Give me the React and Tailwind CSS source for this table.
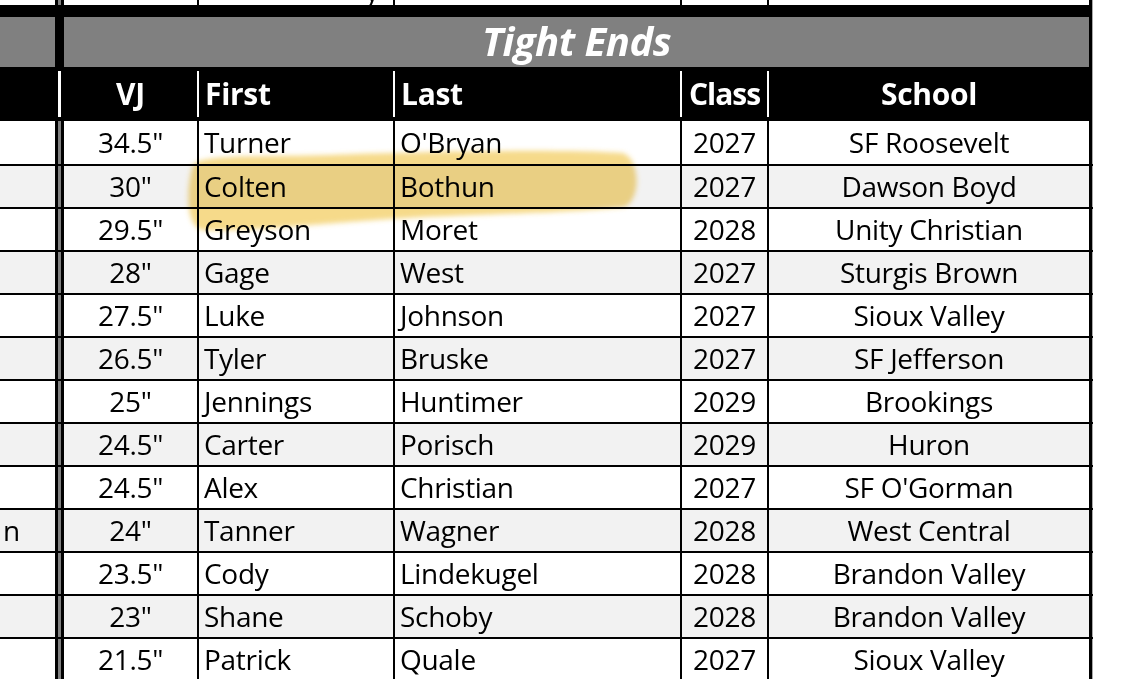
const rows = [
  ['', '34.5"', 'Turner', "O'Bryan", '2027', 'SF Roosevelt'],
  ['', '30"', 'Colten', 'Bothun', '2027', 'Dawson Boyd'],
  ['', '29.5"', 'Greyson', 'Moret', '2028', 'Unity Christian'],
  ['', '28"', 'Gage', 'West', '2027', 'Sturgis Brown'],
  ['', '27.5"', 'Luke', 'Johnson', '2027', 'Sioux Valley'],
  ['', '26.5"', 'Tyler', 'Bruske', '2027', 'SF Jefferson'],
  ['', '25"', 'Jennings', 'Huntimer', '2029', 'Brookings'],
  ['', '24.5"', 'Carter', 'Porisch', '2029', 'Huron'],
  ['', '24.5"', 'Alex', 'Christian', '2027', "SF O'Gorman"],
  ['n', '24"', 'Tanner', 'Wagner', '2028', 'West Central'],
  ['', '23.5"', 'Cody', 'Lindekugel', '2028', 'Brandon Valley'],
  ['', '23"', 'Shane', 'Schoby', '2028', 'Brandon Valley'],
  ['', '21.5"', 'Patrick', 'Quale', '2027', 'Sioux Valley'],
]

const Sep = () => <div className="w-[2px] shrink-0 bg-black"></div>
const Double = () => <div className="w-[9px] shrink-0 border-x-[3px] border-black bg-[#808080]"></div>
const RightEdge = () => (
  <>
    <div className="w-[3px] shrink-0 bg-black"></div>
    <div className="w-[1px] shrink-0 bg-[#a8a8a8]"></div>
  </>
)

const HeadSep = ({ w = 'w-[2px]', px = '' }) => (
  <div className={`${w} ${px} shrink-0 flex py-[4px]`}>
    <div className="w-full bg-white"></div>
  </div>
)

const DataRow = ({ row, index }) => {
  const [left, vj, first, last, cls, school] = row
  return (
    <div className={`flex h-[43px] ${index > 0 ? 'border-t-2 border-black' : ''}`}>
      <div className={`flex ${index % 2 ? 'bg-[#f2f2f2]' : 'bg-white'}`}>
        <div className="w-[55px] shrink-0 flex items-center pb-[2px] pl-[3px] overflow-hidden">{left}</div>
        <Double />
        <div className="w-[133px] shrink-0 flex items-center justify-center pb-[2px]">{vj}</div>
        <Sep />
        <div className="w-[194px] shrink-0 flex items-center pb-[2px] pl-[5px]">{first}</div>
        <Sep />
        <div className="w-[285px] shrink-0 flex items-center pb-[2px] pl-[5px]">{last}</div>
        <Sep />
        <div className="w-[85px] shrink-0 flex items-center justify-center pb-[2px]">{cls}</div>
        <Sep />
        <div className="w-[320px] shrink-0 flex items-center justify-center pb-[2px]">{school}</div>
      </div>
      <RightEdge />
    </div>
  )
}

export default function App() {
  return (
    <div className="relative w-[1124px] h-[679px] overflow-hidden bg-white text-black font-['Open_Sans','Lato',sans-serif] text-[28px] tracking-[-0.3px] leading-none">
      <div className="w-[1093px]">
        {/* bottom of the table above */}
        <div className="flex h-[5px] bg-white">
          <div className="w-[55px] shrink-0"></div>
          <Double />
          <div className="w-[133px] shrink-0"></div>
          <Sep />
          <div className="w-[194px] shrink-0 overflow-hidden">
            <div className="pl-[166px] -mt-[24px] leading-[29px]">y</div>
          </div>
          <Sep />
          <div className="w-[285px] shrink-0"></div>
          <Sep />
          <div className="w-[85px] shrink-0"></div>
          <Sep />
          <div className="w-[320px] shrink-0"></div>
          <RightEdge />
        </div>
        <div className="flex h-[12px]">
          <div className="w-[1092px] bg-black"></div>
          <div className="w-[1px] bg-[#a8a8a8]"></div>
        </div>

        {/* title */}
        <div className="flex h-[50px]">
          <div className="w-[55px] shrink-0 bg-[#808080]"></div>
          <div className="w-[9px] shrink-0 bg-black"></div>
          <div className="w-[1025px] shrink-0 bg-[#808080] flex items-center justify-center text-white font-bold italic text-[40px] tracking-[-0.5px] pb-[2px]">
            Tight Ends
          </div>
          <RightEdge />
        </div>

        {/* column headers */}
        <div className="flex h-[54px] text-white font-bold text-[30px]">
          <div className="flex bg-black">
            <div className="w-[55px] shrink-0"></div>
            <HeadSep w="w-[9px]" px="px-[3px]" />
            <div className="w-[133px] shrink-0 flex items-center justify-center">VJ</div>
            <HeadSep />
            <div className="w-[194px] shrink-0 flex items-center pl-[6px]">First</div>
            <HeadSep />
            <div className="w-[285px] shrink-0 flex items-center pl-[6px]">Last</div>
            <HeadSep />
            <div className="w-[85px] shrink-0 flex items-center justify-center tracking-[-1px]">Class</div>
            <HeadSep />
            <div className="w-[320px] shrink-0 flex items-center justify-center">School</div>
          </div>
          <RightEdge />
        </div>

        {rows.map((row, i) => (
          <DataRow key={i} row={row} index={i} />
        ))}
      </div>

      {/* highlighter stroke */}
      <svg
        className="absolute top-0 left-0 pointer-events-none mix-blend-multiply"
        width="1124"
        height="679"
      >
        <defs>
          <filter id="soft" x="-10%" y="-30%" width="120%" height="160%">
            <feGaussianBlur stdDeviation="2.5" />
          </filter>
        </defs>
        <path
          d="M 192 168 C 190 154, 260 157, 330 155 C 450 151, 560 149, 622 153 C 640 157, 642 200, 624 207 C 560 214, 460 214, 390 219 C 310 224, 250 232, 202 230 C 186 226, 186 192, 192 168 Z"
          fill="#f0c23a"
          fillOpacity="0.6"
          filter="url(#soft)"
        />
      </svg>
    </div>
  )
}
